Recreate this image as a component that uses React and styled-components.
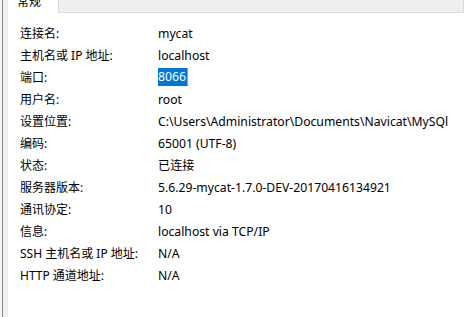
import React from "react";
import styled, { createGlobalStyle } from "styled-components";

const Global = createGlobalStyle`
  html, body { margin: 0; padding: 0; background: #ffffff; overflow: hidden; }
  body { font-family: "Noto Sans", "Noto Sans CJK SC", sans-serif; }
`;

const Window = styled.div`
  display: flex;
  width: 465px;
  height: 317px;
  background: #ffffff;
`;

const Edge = styled.div`
  width: 8px;
  flex: none;
  background: #f0f0f0;
  border-left: 2px solid #f4f4f4;
  box-sizing: border-box;
  position: relative;
  &::before {
    content: "";
    position: absolute;
    left: 0;
    top: 0;
    bottom: 0;
    width: 1px;
    background: #8a8a8a;
  }
`;

const Panel = styled.div`
  flex: 1;
  display: flex;
  flex-direction: column;
`;

const TabStrip = styled.div`
  display: flex;
  height: 13px;
  flex: none;
`;

const Tab = styled.div`
  width: 50px;
  height: 13px;
  overflow: hidden;
  background: #ffffff;
  font-size: 12px;
  color: #000;
  display: flex;
  align-items: flex-end;
  justify-content: center;
  padding-right: 8px;
  box-sizing: border-box;
  & > span {
    display: block;
    line-height: 16px;
    margin-bottom: 3px;
  }
`;

const TabFiller = styled.div`
  flex: 1;
  background: #efefef;
  border-left: 1px solid #d9d9d9;
  border-bottom: 1px solid #d9d9d9;
  border-right: 1px solid #d9d9d9;
  box-sizing: border-box;
  margin-right: 1px;
`;

const Grid = styled.div`
  display: grid;
  grid-template-columns: 138px 1fr;
  grid-auto-rows: 22px;
  padding: 9px 0 0 12px;
  font-size: 12px;
  color: #000;
`;

const Label = styled.div`
  display: flex;
  align-items: center;
  white-space: nowrap;
`;

const Value = styled.div`
  display: flex;
  align-items: center;
  white-space: nowrap;
  overflow: hidden;
  font-size: 12.2px;
`;

const Selected = styled.span`
  background: #0078d7;
  color: #ffffff;
  line-height: 18px;
  padding: 0 1px 0 0;
  border-right: 1px solid #f08a24;
`;

const rows = [
  ["连接名:", "mycat"],
  ["主机名或 IP 地址:", "localhost"],
  ["端口:", null],
  ["用户名:", "root"],
  ["设置位置:", "C:\\Users\\Administrator\\Documents\\Navicat\\MySQl"],
  ["编码:", "65001 (UTF-8)"],
  ["状态:", "已连接"],
  ["服务器版本:", "5.6.29-mycat-1.7.0-DEV-20170416134921"],
  ["通讯协定:", "10"],
  ["信息:", "localhost via TCP/IP"],
  ["SSH 主机名或 IP 地址:", "N/A"],
  ["HTTP 通道地址:", "N/A"],
];

export default function App() {
  return (
    <>
      <Global />
      <Window>
        <Edge />
        <Panel>
          <TabStrip>
            <Tab><span>常规</span></Tab>
            <TabFiller />
          </TabStrip>
          <Grid>
            {rows.map(([l, v]) => (
              <React.Fragment key={l}>
                <Label>{l}</Label>
                <Value>{v === null ? <Selected>8066</Selected> : v}</Value>
              </React.Fragment>
            ))}
          </Grid>
        </Panel>
      </Window>
    </>
  );
}
